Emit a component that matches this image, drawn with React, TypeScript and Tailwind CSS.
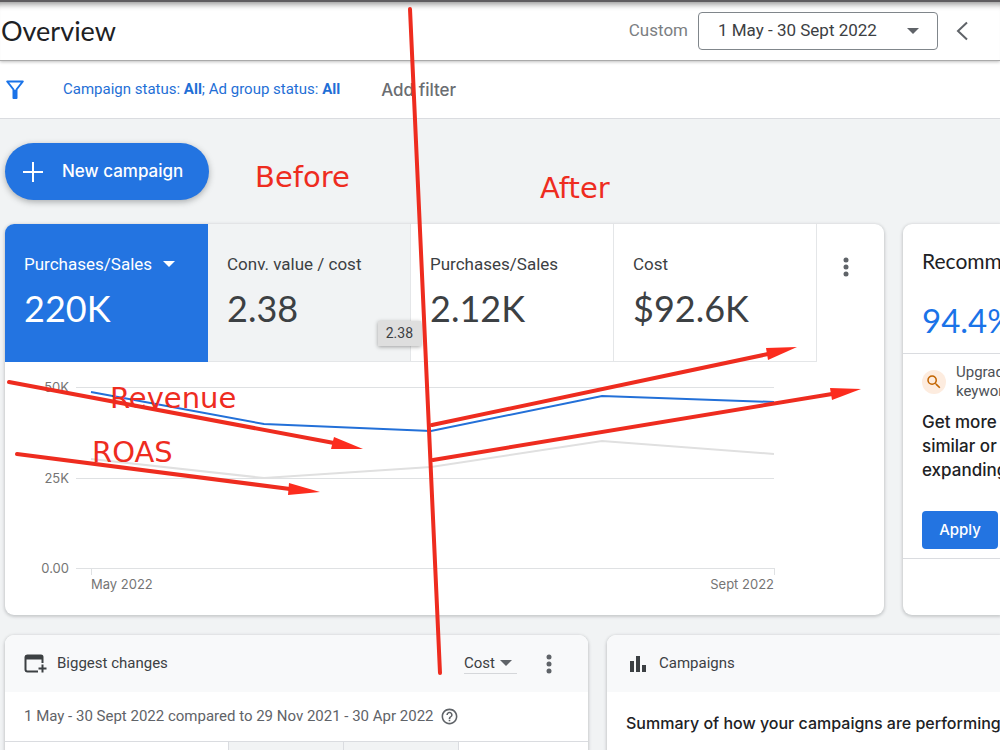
import type { ReactNode } from "react";
import { MdHelpOutline, MdSearch } from "react-icons/md";

const points = {
    revenue: "86,30 259,62 426,69 597,34 769,40",
    roas: "86,97 259,116 426,105 597,79 769,92",
};

const metrics = [
    { label: "Purchases/Sales", value: "2.12K" },
    { label: "Cost", value: "$92.6K" },
];

const Caret = ({ className = "" }: { className?: string }) => (
    <svg viewBox="0 0 12 6" className={`pointer-events-none h-[6px] w-3 fill-current ${className}`}>
        <path d="M0 0h12L6 6z" />
    </svg>
);

const MoreButton = () => (
    <button aria-label="More options" className="flex h-6 w-6 items-center justify-center text-[#5f6368]">
        <svg viewBox="0 0 6 20" className="h-5 w-[6px] fill-current">
            <circle cx="3" cy="3" r="2.5" />
            <circle cx="3" cy="10" r="2.5" />
            <circle cx="3" cy="17" r="2.5" />
        </svg>
    </button>
);

const Card = ({ className = "", children }: { className?: string; children: ReactNode }) => (
    <section className={`bg-white shadow-[0_1px_3px_1px_rgba(60,64,67,0.22)] ${className}`}>{children}</section>
);

const MetricValue = ({ children }: { children: ReactNode }) => (
    <div className="mt-[10px] font-[Lato,sans-serif] text-[36px] leading-[44px]">{children}</div>
);

const Header = () => (
    <header className="relative z-10 flex h-[61px] items-center justify-between border-t-2 border-b border-t-[#5f5d60] border-b-[#aaaaaa] bg-white shadow-[inset_0_8px_6px_-6px_rgba(0,0,0,0.45),0_1px_3px_rgba(0,0,0,0.25)]">
        <h1 className="pl-px font-[Lato,sans-serif] text-[27px] leading-8 text-[#202124]">Overview</h1>
        <div className="flex items-center pr-8 text-[17px]">
            <label htmlFor="range" className="pr-[10px] text-[#7b7e82]">
                Custom
            </label>
            <div className="relative flex items-center text-[#3c4043]">
                <select
                    id="range"
                    className="h-[38px] w-60 appearance-none rounded-[4px] border border-[#80868b] bg-white pl-[19px]"
                >
                    <option>1 May - 30 Sept 2022</option>
                </select>
                <Caret className="absolute right-[19px] text-[#5f6368]" />
            </div>
            <button aria-label="Previous period" className="ml-[18px] text-[#5f6368]">
                <svg viewBox="0 0 12 20" className="h-5 w-3 fill-none stroke-current stroke-2">
                    <path d="M11 1.5L2 10l9 8.5" />
                </svg>
            </button>
        </div>
    </header>
);

const FilterBar = () => (
    <div className="flex h-[58px] items-center border-b border-[#dadce0] bg-white pl-[5px] text-[15px]">
        <button aria-label="Filter" className="text-[#1a73e8]">
            <svg viewBox="0 0 20 20" className="h-5 w-5 fill-none stroke-current">
                <path d="M2.2 1.5h15.6L11.5 9.5v8.5h-3V9.5z" strokeWidth="2" strokeLinejoin="round" />
                <path d="M10 10v8" strokeWidth="3" />
            </svg>
        </button>
        <button className="ml-[38px] text-[#1f6fd6]">
            Campaign status: <b>All</b>; Ad group status: <b>All</b>
        </button>
        <button className="ml-[41px] font-[Inter,sans-serif] text-[17px] leading-5 font-medium text-[#6a6d71]">
            Add filter
        </button>
    </div>
);

const SummaryCard = () => (
    <Card className="min-w-0 flex-1 rounded-[9px]">
        <div className="grid grid-cols-[repeat(4,minmax(0,1fr))_67px] text-[17px] leading-6 text-[#3c4043]">
            <div className="h-[138px] rounded-tl-[9px] bg-[#2374e1] pt-7 pl-[19px] text-white">
                <div className="relative flex w-fit items-center">
                    <select aria-label="Metric" className="appearance-none bg-transparent pr-[22px]">
                        <option>Purchases/Sales</option>
                    </select>
                    <Caret className="absolute right-0" />
                </div>
                <MetricValue>220K</MetricValue>
            </div>
            <div className="relative border-r border-b border-[#e4e6e8] bg-[#f1f3f4] pt-7 pl-[19px]">
                <div>Conv. value / cost</div>
                <MetricValue>2.38</MetricValue>
                <div
                    role="tooltip"
                    className="absolute -right-[11px] bottom-[15px] z-10 bg-[#dedede] px-2 text-[14px] leading-[25px] shadow-[0_1px_4px_rgba(0,0,0,0.35)]"
                >
                    2.38
                </div>
            </div>
            {metrics.map((m) => (
                <div key={m.label} className="border-r border-b border-[#e4e6e8] pt-7 pl-[19px]">
                    <div>{m.label}</div>
                    <MetricValue>{m.value}</MetricValue>
                </div>
            ))}
            <div className="pt-[31px] pl-[17px]">
                <MoreButton />
            </div>
        </div>
        <svg viewBox="0 0 879 253" className="block w-full">
            <g stroke="#dfe1e3">
                <path d="M71 25.5h698M71 116.5h698M71 206.5h698M86.5 206v7M769.5 206v7" />
            </g>
            <polyline points={points.roas} fill="none" stroke="#e0e0e0" strokeWidth="2" />
            <polyline points={points.revenue} fill="none" stroke="#2370d8" strokeWidth="2" />
            <g fill="#757575" fontSize="13" fontFamily="Inter, sans-serif">
                <text x="64" y="30" textAnchor="end">50K</text>
                <text x="64" y="121" textAnchor="end">25K</text>
                <text x="64" y="211" textAnchor="end">0.00</text>
                <text x="86" y="227">May 2022</text>
                <text x="769" y="227" textAnchor="end">Sept 2022</text>
            </g>
        </svg>
    </Card>
);

const RecommendationsCard = () => (
    <Card className="flex w-[97px] shrink-0 flex-col overflow-hidden rounded-l-[9px] whitespace-nowrap">
        <div className="h-[130px] border-b border-[#dadce0] pt-[21px] pl-[19px] font-[Lato,sans-serif]">
            <h2 className="text-[21px] leading-8 text-[#202124]">Recommendations</h2>
            <div className="mt-[21px] text-[33px] leading-[44px] text-[#1a73e8]">94.4%</div>
        </div>
        <div className="flex h-[205px] flex-col border-b border-[#dadce0] pt-[9px] pl-[19px]">
            <div className="flex items-center text-[15px] leading-[19px] text-[#4d5156]">
                <span className="flex h-6 w-6 shrink-0 items-center justify-center rounded-full bg-[#fdecdf]">
                    <MdSearch className="h-[18px] w-[18px] text-[#c26401]" />
                </span>
                <p className="pl-[10px]">
                    Upgrade your
                    <br />
                    keywords
                </p>
            </div>
            <p className="mt-[9px] font-[Inter,sans-serif] text-[17px] leading-6 font-medium text-[#202124]">
                Get more
                <br />
                similar or
                <br />
                expanding
            </p>
            <button className="mt-[29px] h-[38px] w-[76px] rounded-[4px] bg-[#2374e1] pt-px font-[Inter,sans-serif] text-[15px] font-medium text-white">
                Apply
            </button>
        </div>
    </Card>
);

const BiggestChangesCard = () => (
    <Card className="min-w-0 overflow-hidden rounded-t-[9px]">
        <div className="flex h-[57px] items-center bg-[#f8f9fa] pr-[27px] pl-[19px] text-[15px] text-[#3c4043]">
            <svg viewBox="0 0 24 20" className="h-5 w-6 fill-none stroke-current stroke-2">
                <path d="M14 17.5H3.5a2 2 0 0 1-2-2V3a2 2 0 0 1 2-1.5h13.5a1.5 1.5 0 0 1 1.5 1.5v6" />
                <path d="M1.5 3.5h17" strokeWidth="4" />
                <path d="M18.5 10.5v8M14.5 14.5h8" />
            </svg>
            <h2 className="flex-1 pl-[9px]">Biggest changes</h2>
            <div className="relative mr-5 flex items-center border-b border-[#d5d7da]">
                <select aria-label="Sort by" className="appearance-none bg-transparent pr-[22px] leading-5">
                    <option>Cost</option>
                </select>
                <Caret className="absolute right-[5px] text-[#5f6368]" />
            </div>
            <MoreButton />
        </div>
        <div className="flex h-[49px] items-center gap-[6px] pl-[19px] text-[15px] text-[#5f6368]">
            <span>1 May - 30 Sept 2022 compared to 29 Nov 2021 - 30 Apr 2022</span>
            <MdHelpOutline className="h-[19px] w-[19px]" />
        </div>
        <table className="w-full table-fixed border-t border-[#dadce0]">
            <tbody>
                <tr className="h-10">
                    <td className="w-[223px]" />
                    <td className="w-[115px] border-x border-[#dadce0] bg-[#f1f3f4]" />
                    <td className="w-[115px] border-r border-[#dadce0] bg-[#f1f3f4]" />
                    <td />
                </tr>
            </tbody>
        </table>
    </Card>
);

const CampaignsCard = () => (
    <Card className="min-w-0 overflow-hidden rounded-tl-[9px]">
        <div className="flex h-[57px] items-center bg-[#f8f9fa] pl-[23px] text-[15px] text-[#3c4043]">
            <svg viewBox="0 0 16 16" className="h-4 w-4 fill-current">
                <path d="M0 5h4v11H0zM6 0h4v16H6zM12 9h4v7h-4z" />
            </svg>
            <h2 className="pl-[13px]">Campaigns</h2>
        </div>
        <p className="pt-[19px] pl-[19px] font-[Inter,sans-serif] text-[16px] leading-6 font-medium whitespace-nowrap text-[#202124]">
            Summary of how your campaigns are performing
        </p>
    </Card>
);

// Hand-drawn notes laid over the dashboard
const Annotations = () => (
    <svg viewBox="0 0 1000 750" className="pointer-events-none absolute top-0 left-0 z-20 w-full">
        <g stroke="#ee2c1f" strokeWidth="4" strokeLinecap="round">
            <path d="M410 9L440 673" />
            <path d="M9 382L334 443" />
            <path d="M17 454L290 489" />
            <path d="M432 425L768 354" />
            <path d="M433 460L832 394" />
        </g>
        <g fill="#fc2c1e">
            <path d="M334 437L363 449L331 449z" />
            <path d="M289 483L320 492L288 495z" />
            <path d="M766 348L797 347L768 360z" />
            <path d="M830 388L861 389L832 400z" />
        </g>
        <g fill="#ee2c1f" fontSize="29" fontFamily="DejaVu Sans, sans-serif">
            <text x="255" y="187">Before</text>
            <text x="540" y="198">After</text>
            <text x="110" y="408">Revenue</text>
            <text x="92" y="462">ROAS</text>
        </g>
    </svg>
);

const App = () => {
    return (
        <div className="relative h-screen overflow-hidden bg-[#f1f3f4] font-[Roboto,sans-serif]">
            <Header />
            <FilterBar />
            <main className="pt-6 pl-[5px]">
                <button className="flex h-[57px] items-center rounded-full bg-[#2374e1] pr-[26px] pl-[18px] font-[Inter,sans-serif] text-[17px] font-medium text-white shadow-[0_2px_6px_rgba(60,64,67,0.4)]">
                    <svg viewBox="0 0 20 20" className="h-5 w-5 stroke-current stroke-2">
                        <path d="M10 0v20M0 10h20" />
                    </svg>
                    <span className="pl-[19px]">New campaign</span>
                </button>
                <div className="mt-6 flex gap-[19px]">
                    <SummaryCard />
                    <RecommendationsCard />
                </div>
                <div className="mt-5 grid grid-cols-[583fr_393fr] gap-[19px]">
                    <BiggestChangesCard />
                    <CampaignsCard />
                </div>
            </main>
            <Annotations />
        </div>
    );
};

export default App;
